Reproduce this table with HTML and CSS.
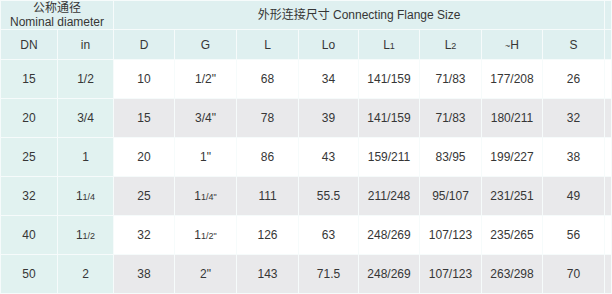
FILE: index.html
```html
<!DOCTYPE html>
<html>
<head>
<meta charset="utf-8">
<link rel="stylesheet" href="styles.css">
</head>
<body>
<table class="spec">
  <colgroup>
    <col class="c57"><col class="c56"><col class="c61"><col class="c62"><col class="c62">
    <col class="c60"><col class="c61"><col class="c62"><col class="c61"><col class="c62"><col>
  </colgroup>
  <thead>
    <tr class="h1">
      <th colspan="2" class="nom">公称通径<br>Nominal diameter</th>
      <th colspan="8">外形连接尺寸 Connecting Flange Size</th>
      <th></th>
    </tr>
    <tr class="h2">
      <th>DN</th><th>in</th><th>D</th><th>G</th><th>L</th><th>Lo</th>
      <th>L<span class="sm">1</span></th><th>L<span class="sm">2</span></th>
      <th><span class="sm">~</span>H</th><th>S</th><th></th>
    </tr>
  </thead>
  <tbody>
    <tr class="w"><td class="t">15</td><td class="t">1/2</td><td>10</td><td>1/2"</td><td>68</td><td>34</td><td>141/159</td><td>71/83</td><td>177/208</td><td>26</td><td></td></tr>
    <tr class="g"><td class="t">20</td><td class="t">3/4</td><td>15</td><td>3/4"</td><td>78</td><td>39</td><td>141/159</td><td>71/83</td><td>180/211</td><td>32</td><td></td></tr>
    <tr class="w"><td class="t">25</td><td class="t">1</td><td>20</td><td>1"</td><td>86</td><td>43</td><td>159/211</td><td>83/95</td><td>199/227</td><td>38</td><td></td></tr>
    <tr class="g"><td class="t">32</td><td class="t">1<span class="sm">1/4</span></td><td>25</td><td>1<span class="sm">1/4"</span></td><td>111</td><td>55.5</td><td>211/248</td><td>95/107</td><td>231/251</td><td>49</td><td></td></tr>
    <tr class="w"><td class="t">40</td><td class="t">1<span class="sm">1/2</span></td><td>32</td><td>1<span class="sm">1/2"</span></td><td>126</td><td>63</td><td>248/269</td><td>107/123</td><td>235/265</td><td>56</td><td></td></tr>
    <tr class="g"><td class="t">50</td><td class="t">2</td><td>38</td><td>2"</td><td>143</td><td>71.5</td><td>248/269</td><td>107/123</td><td>263/298</td><td>70</td><td></td></tr>
  </tbody>
</table>
</body>
</html>
```
FILE: styles.css
```css
html, body {
  margin: 0;
  padding: 0;
  background: #ffffff;
}
.spec {
  width: 612px;
  table-layout: fixed;
  border-collapse: collapse;
  font-family: "Liberation Sans", Arial, "Noto Sans CJK SC", sans-serif;
  font-size: 12px;
  color: #363636;
}
.c57 { width: 57px; }
.c56 { width: 56px; }
.c60 { width: 60px; }
.c61 { width: 61px; }
.c62 { width: 62px; }
.spec th, .spec td {
  padding: 0;
  text-align: center;
  vertical-align: middle;
  border: 1px solid #f6fbfb;
  font-weight: normal;
  white-space: nowrap;
  overflow: hidden;
}
.spec thead th {
  background: #dff0f0;
}
.h1 th {
  height: 28px;
  line-height: 14px;
}
.h1 th.nom {
  font-size: 12px;
  line-height: 14px;
}
.h2 th {
  height: 29px;
}
.spec tbody td {
  height: 38px;
}
.w td { background: #ffffff; }
.g td { background: #e9e9eb; }
.spec tbody td.t { background: #e1f2f0; }
.sm {
  font-size: 9px;
}
```
